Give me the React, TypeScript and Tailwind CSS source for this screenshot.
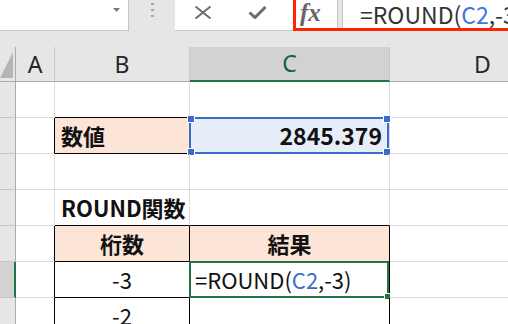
import React from 'react';

const GRID = 'grid grid-cols-[16px_39px_135px_200px_186px]';
const FONT = "font-['Noto_Sans_CJK_JP','Noto_Sans',sans-serif]";

type CellProps = {
  r?: boolean;
  b?: boolean;
  className?: string;
  children?: React.ReactNode;
};

// body cell: right and bottom grid lines, black where the table has borders
const Cell = ({ r, b, className = '', children }: CellProps) => (
  <div
    className={`relative flex h-[36px] items-center whitespace-nowrap border-r border-b text-[22px] text-[#111] ${
      r ? 'border-r-black' : 'border-r-[#dadada]'
    } ${b ? 'border-b-black' : 'border-b-[#dadada]'} ${className}`}
  >
    {children}
  </div>
);

const RowHead = ({ active }: { active?: boolean }) => (
  <div
    className={`h-[36px] border-b border-b-[#c6c6c6] ${
      active ? 'border-r-2 border-r-[#217346] bg-[#d2d2d2]' : 'border-r border-r-[#ababab] bg-[#e6e6e6]'
    }`}
  />
);

const FormulaBar = () => (
  <div className="flex h-[31px] bg-[#e6e6e6]">
    {/* name box */}
    <div className="relative w-[129px] shrink-0 border-r border-b border-[#c6c6c6] bg-white">
      <svg className="absolute left-[113px] top-[8px]" width="7" height="4" viewBox="0 0 7 4">
        <polygon points="0,0 7,0 3.5,4" fill="#7a7a7a" />
      </svg>
    </div>
    {/* grip */}
    <div className="flex w-[46px] shrink-0 justify-center pt-[3px]">
      <div className="flex flex-col gap-[4px]">
        <div className="h-[2px] w-[3px] bg-[#a6a6a6]" />
        <div className="h-[2px] w-[3px] bg-[#a6a6a6]" />
        <div className="h-[2px] w-[3px] bg-[#a6a6a6]" />
      </div>
    </div>
    {/* cancel / enter */}
    <div className="flex w-[118px] shrink-0 items-start border-b border-[#c6c6c6] bg-white pl-[19px] pt-[6px]">
      <svg width="18" height="13" viewBox="0 0 18 13">
        <path d="M1.5 0.5 L16.5 12.5 M16.5 0.5 L1.5 12.5" stroke="#6d6d6d" strokeWidth="2" fill="none" />
      </svg>
      <svg className="ml-[36px]" width="19" height="13" viewBox="0 0 19 13">
        <path d="M1.5 6.5 L7 11.5 L17.5 1" stroke="#6d6d6d" strokeWidth="3" fill="none" />
      </svg>
    </div>
    {/* fx + formula, outlined in red */}
    <div className="flex flex-1 border-l-[3px] border-b-[3px] border-[#ff2400]">
      <div className="w-[41px] shrink-0 bg-white pl-[4px] font-['Liberation_Serif',serif] text-[25px] font-bold italic leading-[26px] text-[#666]">
        fx
      </div>
      <div className="w-[6px] shrink-0 border-x border-[#c6c6c6] bg-[#e6e6e6]" />
      <div className={`flex-1 whitespace-nowrap bg-white pl-[17px] text-[23px] leading-[28px] text-[#333] ${FONT}`}>
        =ROUND(<span className="text-[#3c78d8]">C2</span>,-3)
      </div>
    </div>
  </div>
);

const ColHead = ({ label, active }: { label: string; active?: boolean }) => (
  <div
    className={`flex h-[35px] items-center justify-center border-r border-r-[#c8c8c8] font-['Noto_Sans',sans-serif] text-[23px] ${
      active
        ? 'border-b-2 border-b-[#217346] bg-[#d2d2d2] text-[#1f5c3c]'
        : 'border-b border-b-[#ababab] bg-[#e6e6e6] text-[#262626]'
    }`}
  >
    {label}
  </div>
);

export default function App() {
  return (
    <div className={`h-[324px] w-[508px] overflow-hidden bg-white ${FONT}`}>
      <FormulaBar />
      <div className="h-[16px] bg-[#e6e6e6]" />

      {/* column headers */}
      <div className={GRID}>
        <div className="h-[35px] border-r border-b border-[#ababab] bg-[#e6e6e6]">
          <svg width="15" height="34" viewBox="0 0 15 34">
            <polygon points="0,31 13,31 13,5" fill="#b5b5b5" />
          </svg>
        </div>
        <ColHead label="A" />
        <ColHead label="B" />
        <ColHead label="C" active />
        <ColHead label="D" />
      </div>

      {/* sheet body */}
      <div className={GRID}>
        {/* row 1 */}
        <RowHead />
        <Cell />
        <Cell b />
        <Cell />
        <Cell />

        {/* row 2 */}
        <RowHead />
        <Cell r />
        <Cell r b className="bg-[#fce4d6] pl-[6px] font-bold">
          数値
        </Cell>
        <Cell className="justify-end bg-[#e8eef9] pr-[7px] text-[23px] font-bold">
          2845.379
          <div className="absolute -top-px -left-px right-0 -bottom-px border-2 border-[#3a6cc8]">
            <div className="absolute -top-[4px] -left-[4px] h-[8px] w-[8px] border border-white bg-[#3a6cc8]" />
            <div className="absolute -top-[4px] -right-[4px] h-[8px] w-[8px] border border-white bg-[#3a6cc8]" />
            <div className="absolute -bottom-[4px] -left-[4px] h-[8px] w-[8px] border border-white bg-[#3a6cc8]" />
            <div className="absolute -right-[4px] -bottom-[4px] h-[8px] w-[8px] border border-white bg-[#3a6cc8]" />
          </div>
        </Cell>
        <Cell />

        {/* row 3 */}
        <RowHead />
        <Cell />
        <Cell />
        <Cell />
        <Cell />

        {/* row 4 */}
        <RowHead />
        <Cell />
        <Cell b className="z-10 pl-[6px] font-bold">
          ROUND関数
        </Cell>
        <Cell b />
        <Cell />

        {/* row 5 */}
        <RowHead />
        <Cell r />
        <Cell r b className="justify-center bg-[#fce4d6] font-bold">
          桁数
        </Cell>
        <Cell r b className="justify-center bg-[#fce4d6] font-bold">
          結果
        </Cell>
        <Cell />

        {/* row 6 */}
        <RowHead active />
        <Cell r />
        <Cell r b className="justify-center">
          -3
        </Cell>
        <Cell r b className="pl-[5px]">
          =ROUND(<span className="text-[#3a6cc8]">C2</span>,-3)
          <div className="absolute -top-px -left-px right-0 -bottom-px border-2 border-[#217346]">
            <div className="absolute -right-[4px] -bottom-[4px] h-[7px] w-[7px] border border-white bg-[#217346]" />
          </div>
        </Cell>
        <Cell />

        {/* row 7 */}
        <RowHead />
        <Cell r />
        <Cell r b className="justify-center">
          -2
        </Cell>
        <Cell r b />
        <Cell />
      </div>
    </div>
  );
}
